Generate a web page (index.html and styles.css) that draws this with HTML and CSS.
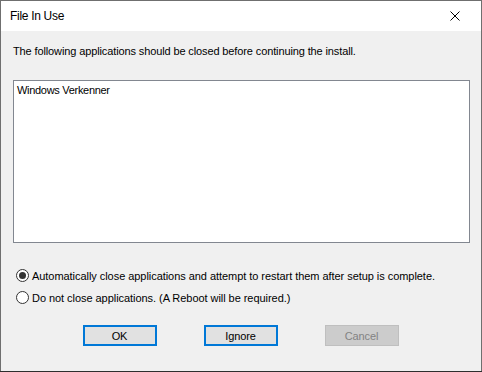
FILE: index.html
```html
<!DOCTYPE html>
<html lang="en">
<head>
    <meta charset="UTF-8">
    <meta name="viewport" content="width=device-width, initial-scale=1.0">
    <title>File In Use</title>
    <link rel="stylesheet" href="styles.css">
</head>
<body>
    <div class="window">
        <div class="titlebar">
            <span class="title">File In Use</span>
            <span class="close">
                <svg width="10" height="10" viewBox="0 0 10 10">
                    <path d="M0.5 0.5 L9.5 9.5 M9.5 0.5 L0.5 9.5" stroke="#000" stroke-width="1" fill="none"/>
                </svg>
            </span>
        </div>

        <div class="content">
            <p class="intro">The following applications should be closed before continuing the install.</p>

            <div class="listbox">
                <div class="list-item">Windows Verkenner</div>
            </div>

            <div class="options">
                <label class="radio">
                    <span class="radio-circle checked"></span>
                    Automatically close applications and attempt to restart them after setup is complete.
                </label>
                <label class="radio">
                    <span class="radio-circle"></span>
                    Do not close applications. (A Reboot will be required.)
                </label>
            </div>

            <div class="buttons">
                <button class="button default">OK</button>
                <button class="button default">Ignore</button>
                <button class="button disabled">Cancel</button>
            </div>
        </div>
    </div>
</body>
</html>
```

FILE: styles.css
```css
body {
    margin: 0;
    padding: 0;
    background-color: #2e2e2e;
    font-family: 'Liberation Sans', Arial, sans-serif;
    font-size: 11px;
    letter-spacing: -0.12px;
    color: #000;
}
.window {
    width: 480px;
    height: 370px;
    border: 1px solid #6f6f6f;
    border-bottom: none;
    background-color: #f0f0f0;
    display: flex;
    flex-direction: column;
}
.titlebar {
    height: 30px;
    background-color: #fff;
    display: flex;
    align-items: center;
    justify-content: space-between;
}
.title {
    font-size: 12px;
    letter-spacing: -0.3px;
    padding-left: 9px;
    padding-bottom: 1px;
}
.close {
    width: 46px;
    display: flex;
    justify-content: center;
    padding-right: 3px;
    padding-bottom: 1px;
}
.close svg {
    display: block;
}
.content {
    padding: 14px 11px 0 12px;
    display: flex;
    flex-direction: column;
}
.intro {
    margin: 0;
    line-height: 13px;
}
.listbox {
    margin-top: 22px;
    height: 157px;
    background-color: #fff;
    border: 1px solid #828790;
    padding: 2px 3px;
}
.list-item {
    line-height: 14px;
    letter-spacing: -0.3px;
}
.options {
    margin-top: 26px;
    display: flex;
    flex-direction: column;
    gap: 9px;
}
.radio {
    display: flex;
    align-items: center;
    gap: 3px;
    padding-left: 3px;
    height: 13px;
    letter-spacing: -0.05px;
}
.radio-circle {
    width: 11px;
    height: 11px;
    border: 1px solid #333;
    border-radius: 50%;
    background-color: #fff;
    display: flex;
    align-items: center;
    justify-content: center;
}
.radio-circle.checked::after {
    content: "";
    width: 7px;
    height: 7px;
    border-radius: 50%;
    background-color: #333;
}
.buttons {
    margin-top: 21px;
    display: flex;
    justify-content: center;
    gap: 47px;
    padding-right: 2px;
}
.button {
    width: 74px;
    height: 21px;
    font-family: inherit;
    font-size: 11px;
    letter-spacing: -0.12px;
    padding: 0;
    background-color: #e1e1e1;
    color: #000;
}
.button.default {
    border: 2px solid #0078d7;
}
.button.disabled {
    border: 1px solid #bfbfbf;
    background-color: #cccccc;
    color: #838383;
}
```
